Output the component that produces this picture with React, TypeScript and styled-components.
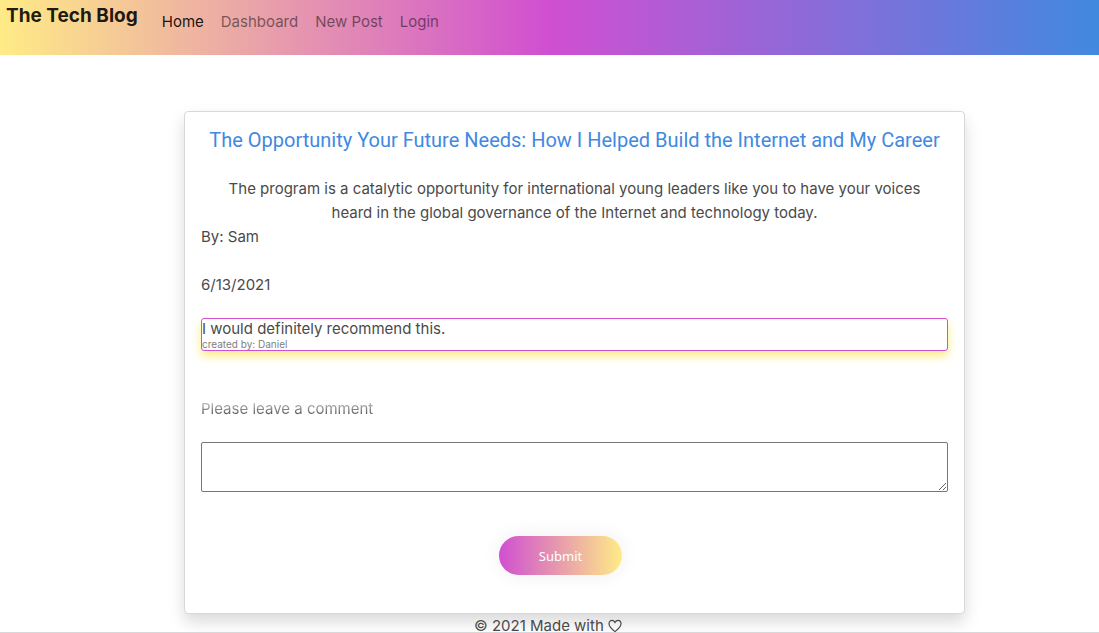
import React from "react";
import styled, { createGlobalStyle } from "styled-components";

const GlobalStyle = createGlobalStyle`
  *, *::before, *::after { box-sizing: border-box; }
  body {
    margin: 0;
    background: #fff;
    color: #4a4a4a;
    font-family: Inter, "Liberation Sans", sans-serif;
    font-size: 15px;
    line-height: 24px;
  }
`;

const Page = styled.div`
  display: flex;
  flex-direction: column;
  min-height: 100vh;
`;

const Navbar = styled.nav`
  display: flex;
  align-items: flex-start;
  height: 55px;
  padding: 0 6px;
  background: linear-gradient(to right, #ffeb86, #d04fd1 50%, #4189e0);
`;

const Brand = styled.a`
  margin-right: 16px;
  color: rgba(0, 0, 0, 0.9);
  font-size: 19px;
  font-weight: 700;
  line-height: 32px;
  text-decoration: none;
`;

const NavList = styled.ul`
  display: flex;
  gap: 1px;
  margin: 0;
  padding: 10px 0 0;
  list-style: none;
`;

const NavLink = styled.a<{ $active?: boolean }>`
  display: block;
  padding: 0 8px;
  color: ${(p) => (p.$active ? "rgba(0, 0, 0, 0.9)" : "rgba(0, 0, 0, 0.5)")};
  text-decoration: none;
`;

const Main = styled.main`
  padding: 56px 134px 0 184px;
`;

const Card = styled.article`
  display: flex;
  flex-direction: column;
  padding: 12px 16px 38px;
  border: 1px solid #d8d8d8;
  border-radius: 4px;
  background: #fff;
  box-shadow: 0 8px 16px rgba(0, 0, 0, 0.15);
`;

const Title = styled.h1`
  margin: 0 0 21px;
  font-family: Roboto, sans-serif;
  font-size: 20px;
  font-weight: 400;
  line-height: 32px;
  text-align: center;
`;

const TitleLink = styled.a`
  color: #4189e0;
  text-decoration: none;
`;

const Summary = styled.p`
  margin: 0;
  padding: 0 16px;
  text-align: center;
`;

const Meta = styled.p`
  margin: 0;

  & + & {
    margin: 24px 0 21px;
  }
`;

const Comment = styled.section`
  height: 33px;
  border: 1px solid #d04fd1;
  border-radius: 3px;
  box-shadow: 0 5px 10px #ffeb86;
`;

const CommentText = styled.p`
  margin: 0;
  line-height: 20px;
`;

const CommentAuthor = styled.p`
  margin: 0;
  color: #808080;
  font-size: 10px;
  line-height: 11px;
`;

const Form = styled.form`
  display: flex;
  flex-direction: column;
  margin-top: 46px;
`;

const Label = styled.label`
  align-self: flex-start;
  margin-bottom: 21px;
  background: linear-gradient(to bottom, #f0f0f0, #4a4a4a 80%);
  background-clip: text;
  -webkit-background-clip: text;
  color: transparent;
`;

const CommentBox = styled.textarea`
  width: 100%;
  height: 50px;
  padding: 2px;
  border: 1px solid #767676;
  border-radius: 2px;
  background: #fff;
  font: inherit;
  resize: both;
`;

const SubmitButton = styled.button`
  align-self: center;
  height: 39px;
  margin: 44px 28px 0 0;
  padding: 0 40px;
  border: 0;
  border-radius: 20px;
  background: linear-gradient(to right, #d04fd1, #ffeb86);
  box-shadow: 0 0 20px #eeeeee;
  color: #fff;
  font-family: "Noto Sans", sans-serif;
  font-size: 13px;
  line-height: 20px;
`;

const Footer = styled.footer`
  height: 19px;
  padding-right: 3px;
  border-bottom: 1px solid #d8d8dc;
  text-align: center;
`;

const Heart = styled.svg`
  width: 14px;
  height: 14px;
  vertical-align: -2px;
`;

const links = ["Home", "Dashboard", "New Post", "Login"];

export default function App() {
  return (
    <Page>
      <GlobalStyle />
      <Navbar>
        <Brand href="#">The Tech Blog</Brand>
        <NavList>
          {links.map((name, i) => (
            <li key={name}>
              <NavLink href="#" $active={i === 0}>{name}</NavLink>
            </li>
          ))}
        </NavList>
      </Navbar>
      <Main>
        <Card>
          <Title>
            <TitleLink href="#">
              The Opportunity Your Future Needs: How I Helped Build the Internet and My Career
            </TitleLink>
          </Title>
          <Summary>
            The program is a catalytic opportunity for international young leaders like you to have
            your voices heard in the global governance of the Internet and technology today.
          </Summary>
          <Meta>By: Sam</Meta>
          <Meta>6/13/2021</Meta>
          <Comment>
            <CommentText>I would definitely recommend this.</CommentText>
            <CommentAuthor>created by: Daniel</CommentAuthor>
          </Comment>
          <Form onSubmit={(e) => e.preventDefault()}>
            <Label htmlFor="comment">Please leave a comment</Label>
            <CommentBox id="comment" />
            <SubmitButton type="submit">Submit</SubmitButton>
          </Form>
        </Card>
      </Main>
      <Footer>
        © 2021 Made with{" "}
        <Heart viewBox="0 0 14 14" fill="none" stroke="currentColor" strokeWidth="1.2" aria-label="love">
          <path d="M7 12.6C4.6 10.7 1 8 1 4.7 1 2.7 2.3 1.4 4 1.4c1.3 0 2.4.8 3 2 .6-1.2 1.700-2 3-2 1.700 0 3 1.300 3 3.300 0 3.300-3.600 6-6 7.900z" />
        </Heart>
      </Footer>
    </Page>
  );
}
